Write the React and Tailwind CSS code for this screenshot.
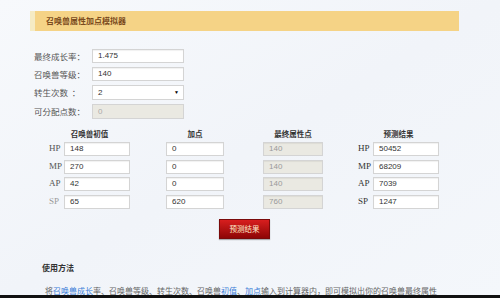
const ROWS = [
  { k: 'HP', base: '148', add: '0', fin: '140', res: '50452' },
  { k: 'MP', base: '270', add: '0', fin: '140', res: '68209' },
  { k: 'AP', base: '42', add: '0', fin: '140', res: '7039' },
  { k: 'SP', base: '65', add: '620', fin: '760', res: '1247' },
];

const cjk = { fontFamily: '"Noto Sans CJK SC", "Noto Sans", sans-serif' };
const num = { fontFamily: '"Liberation Sans", Arial, sans-serif' };
const serif = { fontFamily: '"Liberation Serif", "Noto Sans CJK SC", serif' };

function Field({ value, w, disabled, children }) {
  return (
    <div
      className={`h-[14px] border border-[#d4d4d4] shadow-[inset_0_1px_1px_rgba(0,0,0,0.06)] flex items-center pl-[5px] text-[8px] ${disabled ? 'bg-[#eae9e2] text-[#9a9a9a]' : 'bg-white text-[#333]'}`}
      style={{ ...num, width: w }}
    >
      <span className="flex-1">{value}</span>
      {children}
    </div>
  );
}

function Col({ title, label, labelLight, items, w, disabled, className }) {
  return (
    <div className={`flex flex-col ${className}`}>
      <div className="h-[15px] flex items-center justify-center text-[7.5px] font-bold text-[#333]" style={cjk}>
        {title}
      </div>
      <div className="flex flex-col gap-[3.5px] mt-[1px]">
        {items.map((r, i) => (
          <div key={r.k} className="flex items-center">
            {label && (
              <span
                className={`w-[15px] text-[9px] ${label === 'light' && i === 3 ? 'text-[#999]' : labelLight ? 'text-[#555]' : 'text-[#333]'}`}
                style={serif}
              >
                {r.k}
              </span>
            )}
            <Field value={r.v} w={w} disabled={disabled} />
          </div>
        ))}
      </div>
    </div>
  );
}

export default function App() {
  return (
    <div className="w-[500px] h-[298px] overflow-hidden bg-gradient-to-br from-[#f7f9fc] via-[#f1f4f9] to-[#f4f7fb] relative" style={cjk}>
      <div className="pt-[11px] pl-[30px]">
        <div className="w-[429px] h-[20px] bg-[#f5d386] border-l-[5px] border-[#f5ebc4] flex items-center pl-[11px] text-[8px] font-bold text-[#7b4b20]">
          召唤兽属性加点模拟器
        </div>
      </div>

      <div className="flex flex-col gap-[4px] mt-[18px] pl-[34px]">
        {[
          ['最终成长率：', '1.475'],
          ['召唤兽等级：', '140'],
        ].map(([l, v]) => (
          <div key={l} className="flex items-center">
            <span className="w-[58px] text-[8.5px] text-[#555]">{l}</span>
            <Field value={v} w={92} />
          </div>
        ))}
        <div className="flex items-center">
          <span className="w-[58px] text-[8.5px] text-[#555]">转生次数&nbsp;&nbsp;：</span>
          <div className="h-[15px] w-[92px] bg-white border border-[#d4d4d4] flex items-center pl-[5px] pr-[4px] text-[8px] text-[#333]" style={num}>
            <span className="flex-1">2</span>
            <span className="text-[5px] text-black">▼</span>
          </div>
        </div>
        <div className="flex items-center">
          <span className="w-[58px] text-[8.5px] text-[#555]">可分配点数：</span>
          <div className="h-[15px] w-[92px] bg-[#eae9e2] border border-[#d4d4d4] flex items-center pl-[5px] text-[8px] text-[#aaa]" style={num}>
            0
          </div>
        </div>
      </div>

      <div className="flex mt-[7px] pl-[49px]">
        <Col title="召唤兽初值" label="light" labelLight items={ROWS.map((r) => ({ k: r.k, v: r.base }))} w={66} />
        <Col title="加点" items={ROWS.map((r) => ({ k: r.k, v: r.add }))} w={58} className="ml-[36px]" />
        <Col title="最终属性点" items={ROWS.map((r) => ({ k: r.k, v: r.fin }))} w={60} disabled className="ml-[39px]" />
        <Col title="预测结果" label="dark" items={ROWS.map((r) => ({ k: r.k, v: r.res }))} w={66} className="ml-[35px]" />
      </div>

      <div className="flex justify-center mt-[10px]">
        <button className="ml-[-11px] w-[51px] h-[20px] bg-gradient-to-b from-[#d81e1e] to-[#8e0606] border border-[#7a0a0a] text-[7.5px] text-[#ffe9c8] shadow-[0_1px_1px_rgba(0,0,0,0.3)]">
          预测结果
        </button>
      </div>

      <div className="mt-[23px] pl-[42px] text-[8px] font-bold text-[#333]">使用方法</div>
      <div className="mt-[11px] pl-[45px] text-[8px] text-[#666] whitespace-nowrap">
        将<span className="text-[#3b7dd8]">召唤兽成长</span>率、召唤兽等级、转生次数、召唤兽<span className="text-[#3b7dd8]">初值</span>、<span className="text-[#3b7dd8]">加点</span>输入到计算器内，即可模拟出你的召唤兽最终属性
      </div>

      <div className="absolute left-0 right-0 bottom-0 h-[3px] bg-[#111]" />
    </div>
  );
}
